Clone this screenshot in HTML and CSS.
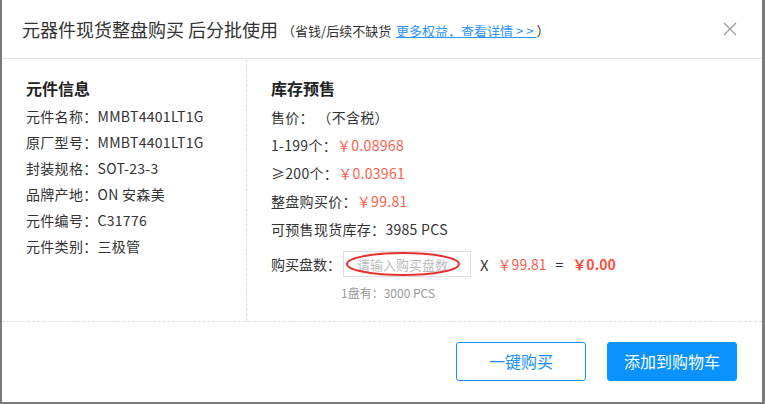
FILE: index.html
```html
<!DOCTYPE html>
<html>
<head>
  <title>整盘购买</title>
  <link rel="stylesheet" href="styles.css">
</head>

<body>
  <div class="dialog">
    <div class="dialog-header">
      <span class="dialog-title">元器件现货整盘购买 后分批使用</span>
      <span class="dialog-sub">（省钱/后续不缺货 <a href="#">更多权益，查看详情&nbsp;<span class="arrows">&gt;&gt;</span></a>）</span>
      <span class="close-btn">
        <svg width="14" height="14" viewBox="0 0 14 14"><path d="M1 1L13 13M13 1L1 13" stroke="#999" stroke-width="1.2" fill="none"/></svg>
      </span>
    </div>

    <div class="dialog-body">
      <div class="col col-left">
        <h3>元件信息</h3>
        <div class="info-row">元件名称：MMBT4401LT1G</div>
        <div class="info-row">原厂型号：MMBT4401LT1G</div>
        <div class="info-row">封装规格：SOT-23-3</div>
        <div class="info-row">品牌产地：ON 安森美</div>
        <div class="info-row">元件编号：C31776</div>
        <div class="info-row">元件类别：三极管</div>
      </div>

      <div class="col col-right">
        <h3>库存预售</h3>
        <div class="price-row">售价：&nbsp;（不含税）</div>
        <div class="price-row">1-199个：<span class="red">￥0.08968</span></div>
        <div class="price-row">≥200个：<span class="red">￥0.03961</span></div>
        <div class="price-row">整盘购买价：<span class="red">￥99.81</span></div>
        <div class="price-row">可预售现货库存：3985 PCS</div>
        <div class="buy-row">
          <span>购买盘数：</span>
          <span class="input-wrap">
            <input type="text" placeholder="请输入购买盘数" />
            <svg class="mark" width="116" height="26" viewBox="0 0 116 26"><ellipse cx="58" cy="13" rx="56" ry="11" stroke="#e8322f" stroke-width="2" fill="none"/></svg>
          </span>
          <span class="times">X</span>
          <span class="red">￥99.81</span>
          <span class="equals">=</span>
          <span class="total">￥0.00</span>
        </div>
        <div class="reel-note">1盘有：3000 PCS</div>
      </div>
    </div>

    <div class="dialog-footer">
      <button class="btn btn-outline">一键购买</button>
      <button class="btn btn-primary">添加到购物车</button>
    </div>
  </div>
</body>
</html>
```

FILE: styles.css
```css
body {
  margin: 0;
  padding: 0;
  background-color: #7b7b7b;
  font-family: 'Noto Sans CJK SC', 'Open Sans', sans-serif;
  color: #333;
}

.dialog {
  margin-left: 2px;
  width: 760px;
  height: 402px;
  background-color: #fff;
  display: flex;
  flex-direction: column;
}

/* Header */
.dialog-header {
  height: 58px;
  border-bottom: 1px solid #e5e5e5;
  display: flex;
  align-items: center;
  padding: 0 20px 0 20px;
}

.dialog-title {
  font-size: 18px;
  color: #333;
}

.dialog-sub {
  font-size: 13px;
  margin-left: 4px;
  margin-top: 2px;
}

.dialog-sub a {
  color: #2b95ff;
  text-decoration: underline;
  margin-left: 2px;
}

.arrows {
  letter-spacing: 3px;
}

.close-btn {
  margin-left: auto;
  margin-right: 5px;
  display: flex;
}

/* Body */
.dialog-body {
  height: 262px;
  display: flex;
  border-bottom: 1px dashed #ddd;
}

.col {
  padding-top: 17px;
}

.col-left {
  width: 220px;
  padding-left: 24px;
  border-right: 1px dashed #ddd;
}

.col-right {
  padding-left: 24px;
  flex: 1;
}

h3 {
  margin: 0 0 3px 0;
  font-size: 16px;
  line-height: 24px;
  font-weight: bold;
  color: #222;
}

.info-row {
  font-size: 14px;
  line-height: 26px;
  letter-spacing: 0.3px;
}

.price-row {
  font-size: 14px;
  line-height: 28px;
  letter-spacing: 0.3px;
}

.red {
  color: #ff5e4d;
}

.buy-row {
  display: flex;
  align-items: center;
  height: 30px;
  margin-top: 6px;
  font-size: 14px;
}

.input-wrap {
  position: relative;
  display: inline-block;
  margin-left: 2px;
  margin-right: 9px;
}

.input-wrap input {
  width: 128px;
  height: 26px;
  box-sizing: border-box;
  border: 1px solid #ddd;
  padding: 0 0 0 13px;
  font-size: 13px;
  font-family: 'Noto Sans CJK SC', sans-serif;
  outline: none;
}

.input-wrap input::placeholder {
  color: #bbb;
}

.mark {
  position: absolute;
  left: 2px;
  top: 0;
}

.times {
  font-size: 15px;
  margin-right: 9px;
}

.equals {
  margin: 0 9px;
}

.total {
  color: #ff4f3b;
  font-weight: bold;
}

.reel-note {
  font-size: 12px;
  color: #999;
  margin-top: 5px;
  margin-left: 70px;
}

/* Footer */
.dialog-footer {
  flex: 1;
  display: flex;
  justify-content: flex-end;
  align-items: center;
  gap: 21px;
  padding-right: 25px;
  padding-bottom: 2px;
}

.btn {
  width: 130px;
  height: 39px;
  font-size: 16px;
  font-family: 'Noto Sans CJK SC', sans-serif;
  border-radius: 3px;
  cursor: pointer;
}

.btn-outline {
  background-color: #fff;
  color: #1a8fff;
  border: 1px solid #1a8fff;
}

.btn-primary {
  background-color: #0a92ff;
  color: #fff;
  border: 1px solid #0a92ff;
}
```
